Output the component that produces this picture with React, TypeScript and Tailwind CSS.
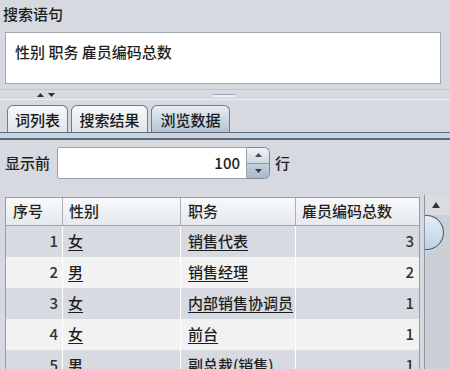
import React from "react";

const rows = [
  { n: 1, g: "女", j: "销售代表", c: 3 },
  { n: 2, g: "男", j: "销售经理", c: 2 },
  { n: 3, g: "女", j: "内部销售协调员", c: 1 },
  { n: 4, g: "女", j: "前台", c: 1 },
  { n: 5, g: "男", j: "副总裁(销售)", c: 1 },
];

function Tab({ label, w, selected }: { label: string; w: string; selected?: boolean }) {
  return (
    <div
      className={
        "h-[27px] flex items-center justify-center rounded-t-[6px] border border-b-0 border-[#6f7b89] text-[15px] leading-[20px] pt-[2px] " +
        w +
        (selected
          ? " bg-gradient-to-b from-[#e8eef4] to-[#b3c3d4] text-[#1a1a1a]"
          : " bg-gradient-to-b from-[#f7f8f9] to-[#e2e5e9] text-[#1a1a1a]")
      }
    >
      {label}
    </div>
  );
}

export default function App() {
  return (
    <div className="w-[450px] h-[369px] overflow-hidden bg-[#d6d9df] font-['Noto_Sans_CJK_SC',sans-serif] font-medium text-[#1f1f1f] pt-[4px]">
      <div className="h-[20px] leading-[20px] text-[15px] ml-[3px]">搜索语句</div>
      <div className="mt-[8px] ml-[5px] w-[436px] h-[52px] border border-[#a3a9b1] bg-white pl-[9px] pt-[9px] text-[15px] leading-[20px]">
        性别 职务 雇员编码总数
      </div>
      {/* splitter */}
      <div className="h-[5px]" />
      <div className="h-[1px] bg-[#c2c6cd]" />
      <div className="h-[9px] flex items-center">
        <div className="ml-[37px] flex items-center gap-[4px]">
          <svg width="7" height="4" viewBox="0 0 7 4"><path d="M0 4 L3.5 0 L7 4 Z" fill="#333" /></svg>
          <svg width="7" height="4" viewBox="0 0 7 4"><path d="M0 0 L3.5 4 L7 0 Z" fill="#333" /></svg>
        </div>
        <div className="ml-[157px] mt-[2px] w-[24px] h-[3px] rounded-full border-t border-[#9ca3ad] bg-[#eef0f3]" />
      </div>
      <div className="h-[1px] bg-[#eceef1]" />
      <div className="h-[5px]" />
      {/* tabs */}
      <div className="h-[27px] flex items-end pl-[7px] gap-[3px]">
        <Tab label="词列表" w="w-[61px]" />
        <Tab label="搜索结果" w="w-[77px]" />
        <Tab label="浏览数据" w="w-[79px]" selected />
      </div>
      <div className="h-[8px] border-t border-b-2 border-[#5b697a] bg-[#c9d4df]" />
      {/* spinner row */}
      <div className="mt-[7px] h-[32px] flex items-center">
        <div className="ml-[5px] w-[52px] text-[15px] leading-[20px]">显示前</div>
        <div className="w-[190px] h-[32px] border border-[#98a1ab] rounded-l-[3px] bg-white flex items-center justify-end pr-[6px] text-[15px]">
          100
        </div>
        <div className="w-[23px] h-[32px] flex flex-col border border-l-0 border-[#7b8896] rounded-r-[6px] overflow-hidden">
          <div className="flex-1 flex items-center justify-center bg-gradient-to-b from-[#f1f3f6] to-[#cfd8e2] border-b border-[#8d9aa8]">
            <svg width="7" height="4" viewBox="0 0 7 4"><path d="M0 4 L3.5 0 L7 4 Z" fill="#3f4d5c" /></svg>
          </div>
          <div className="flex-1 flex items-center justify-center bg-gradient-to-b from-[#c3d0de] to-[#a7b9cc]">
            <svg width="7" height="4" viewBox="0 0 7 4"><path d="M0 0 L3.5 4 L7 0 Z" fill="#2e3b4a" /></svg>
          </div>
        </div>
        <div className="ml-[5px] text-[15px] leading-[20px]">行</div>
      </div>
      {/* table + scrollbar */}
      <div className="mt-[18px] flex items-start">
        <div className="ml-[5px] w-[415px] border border-[#959da7] border-b-0">
          <div className="grid grid-cols-[57px_118px_115px_123px] h-[28px] bg-gradient-to-b from-[#f8f9fa] to-[#e6e9ed] border-b border-[#9da4ad] text-[15px]">
            <div className="flex items-center pl-[7px] border-r border-[#aab0b8]">序号</div>
            <div className="flex items-center pl-[6px] border-r border-[#aab0b8]">性别</div>
            <div className="flex items-center pl-[7px] border-r border-[#aab0b8]">职务</div>
            <div className="flex items-center pl-[6px]">雇员编码总数</div>
          </div>
          {rows.map((r, i) => (
            <div
              key={r.n}
              className={
                "grid grid-cols-[57px_118px_115px_123px] h-[31px] text-[15px] " +
                (i % 2 === 0 ? "bg-[#d7dae0]" : "bg-[#f2f2f2]")
              }
            >
              <div className="flex items-center justify-end pr-[4px] border-r border-white text-[#333]">{r.n}</div>
              <div className="flex items-center pl-[5px] border-r border-white">
                <span className="underline underline-offset-[3px]">{r.g}</span>
              </div>
              <div className="flex items-center pl-[7px] border-r border-white">
                <span className="underline underline-offset-[3px]">{r.j}</span>
              </div>
              <div className="flex items-center justify-end pr-[5px] text-[#333]">{r.c}</div>
            </div>
          ))}
        </div>
        <div className="ml-[4px] -mt-[2px] w-[26px] h-[180px] border-l border-[#8e959e] bg-[#cbcfd6] flex flex-col">
          <div className="h-[20px] flex items-center pl-[7px] bg-[#d9dce1]">
            <svg width="8" height="6" viewBox="0 0 8 6"><path d="M0 6 L4 0 L8 6 Z" fill="#2d3540" /></svg>
          </div>
          <div className="w-[19px] h-[35px] rounded-r-full border border-l-0 border-[#4d5c6c] bg-gradient-to-b from-[#e3edf6] to-[#bcd2e6]" />
        </div>
      </div>
    </div>
  );
}
